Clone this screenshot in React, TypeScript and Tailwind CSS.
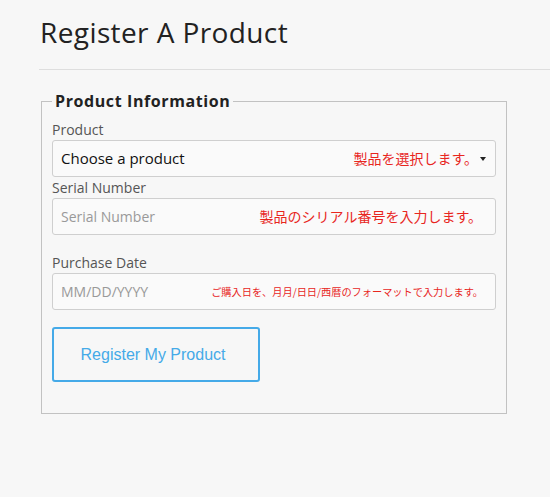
import React from 'react';

const sans = { fontFamily: '"Open Sans", "Noto Sans", sans-serif' };
const jp = { fontFamily: '"Noto Sans CJK JP", sans-serif' };

const App: React.FC = () => {
  return (
    <div className="min-h-[497px] bg-[#f7f7f7] pl-[39px]" style={sans}>
      <h1 className="pt-[14px] pb-[19px] pl-[1px] text-[28px] leading-[36px] tracking-[0.4px] text-[#222]">
        Register A Product
      </h1>
      <div className="border-t border-[#dedede]" />

      <fieldset className="mt-[21px] ml-[2px] w-[466px] border border-[#c2c2c2] pl-[10px] pr-[10px] pb-[31px]">
        <legend className="px-[3px] text-[16px] font-bold leading-[20px] tracking-[0.6px] text-[#222]">
          Product Information
        </legend>

        <label className="block pt-[9px] text-[14px] leading-[20px] text-[#555]">Product</label>
        <div className="flex h-[37px] items-center justify-between rounded-[3px] border border-[#cfcfcf] bg-[#fafafa] pl-[8px] pr-[9px]">
          <span className="text-[15px] text-[#111]">Choose a product</span>
          <span className="flex items-center gap-[2px]">
            <span className="text-[14px] text-[#e8261e]" style={jp}>
              製品を選択します。
            </span>
            <svg width="6" height="4" viewBox="0 0 6 4">
              <path d="M0 0h6L3 4z" fill="#222" />
            </svg>
          </span>
        </div>

        <label className="block text-[14px] leading-[21px] text-[#555]">Serial Number</label>
        <div className="flex h-[37px] items-center justify-between rounded-[3px] border border-[#cfcfcf] bg-[#fafafa] pl-[8px] pr-[13px]">
          <span className="text-[14px] text-[#999]">Serial Number</span>
          <span className="text-[14px] text-[#e8261e]" style={jp}>
            製品のシリアル番号を入力します。
          </span>
        </div>

        <label className="mt-[18px] block text-[14px] leading-[20px] text-[#555]">Purchase Date</label>
        <div className="flex h-[37px] items-center justify-between rounded-[3px] border border-[#cfcfcf] bg-[#fafafa] pl-[8px] pr-[12px]">
          <span className="text-[14px] text-[#999]">MM/DD/YYYY</span>
          <span className="text-[10.2px] text-[#e8261e]" style={jp}>
            ご購入日を、月月/日日/西暦のフォーマットで入力します。
          </span>
        </div>

        <button
          className="mt-[17px] h-[55px] w-[208px] rounded-[3px] border-2 border-[#45aae8] pr-[6px] text-[16px] text-[#45aae8]"
          style={{ fontFamily: '"Liberation Sans", Arial, sans-serif' }}
        >
          Register My Product
        </button>
      </fieldset>
    </div>
  );
};

export default App;
